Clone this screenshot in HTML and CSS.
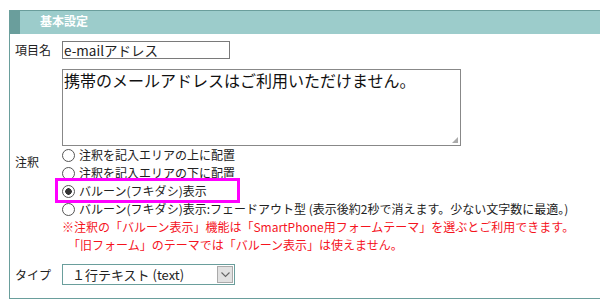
FILE: index.html
```html
<!DOCTYPE html>
<html lang="ja">

<head>
    <meta charset="UTF-8">
    <meta name="viewport" content="width=device-width, initial-scale=1.0">
    <title>基本設定</title>
    <link rel="stylesheet" href="styles.css">
</head>

<body>
    <div class="panel">
        <div class="panel-head">
            <span class="mark"></span>
            <h2>基本設定</h2>
        </div>

        <div class="form">
            <label class="label" for="item-name">項目名</label>
            <div class="field">
                <input type="text" id="item-name" class="text-input" value="e-mailアドレス">
            </div>

            <div class="label">注釈</div>
            <div class="field">
                <div class="note-wrap">
                    <textarea class="note">携帯のメールアドレスはご利用いただけません。</textarea>
                    <span class="grip"></span>
                </div>
                <div class="options">
                    <label class="option"><input type="radio" name="pos"> 注釈を記入エリアの上に配置</label>
                    <label class="option"><input type="radio" name="pos"> 注釈を記入エリアの下に配置</label>
                    <label class="option"><input type="radio" name="pos" checked> バルーン(フキダシ)表示</label>
                    <label class="option"><input type="radio" name="pos"> バルーン(フキダシ)表示:フェードアウト型 (表示後約2秒で消えます。少ない文字数に最適。)</label>
                    <p class="warn">※注釈の「バルーン表示」機能は「SmartPhone用フォームテーマ」を選ぶとご利用できます。</p>
                    <p class="warn">　「旧フォーム」のテーマでは「バルーン表示」は使えません。</p>
                    <!-- highlight over the chosen option -->
                    <div class="highlight"></div>
                </div>
            </div>

            <label class="label" for="item-type">タイプ</label>
            <div class="field">
                <div class="select-wrap">
                    <select id="item-type" class="type-select">
                        <option>１行テキスト (text)</option>
                    </select>
                    <span class="select-btn">
                        <svg width="9" height="6" viewBox="0 0 9 6">
                            <path d="M0.5 0.5 L4.5 4.5 L8.5 0.5" fill="none" stroke="#666" stroke-width="1.1" />
                        </svg>
                    </span>
                </div>
            </div>
        </div>
    </div>
</body>

</html>
```

FILE: styles.css
```css
body {
    margin: 0;
    padding: 10px 0 0 9px;
    font-family: "Noto Sans CJK JP", sans-serif;
    font-size: 12px;
    color: #222;
    background-color: #fff;
}

.panel {
    width: 591px;
    box-sizing: border-box;
    border-left: 1px solid #6a9e9c;
    border-bottom: 1px solid #6a9e9c;
}

.panel-head {
    display: flex;
    align-items: center;
    height: 23px;
    border-top: 1px solid #6a9e9c;
    background-color: #9ccccb;
}

.mark {
    width: 10px;
    height: 100%;
    background-color: #6a9e9c;
}

.panel-head h2 {
    margin: 0 0 0 20px;
    font-size: 12px;
    font-weight: bold;
    color: #fff;
    line-height: 1;
    padding-bottom: 3px;
}

.form {
    display: grid;
    grid-template-columns: 47px 1fr;
    row-gap: 10px;
    padding: 7px 0 13px 5px;
    align-items: center;
}

.label {
    line-height: 1;
}

.field {
    min-width: 0;
}

.text-input {
    display: block;
    box-sizing: border-box;
    width: 168px;
    height: 18px;
    margin: 0;
    padding: 0 1px;
    border: 1px solid #7a7a7a;
    font-family: "Noto Sans CJK JP", sans-serif;
    font-size: 13.5px;
    color: #222;
    line-height: 16px;
}

.note-wrap {
    position: relative;
    width: 399px;
}

.note {
    display: block;
    box-sizing: border-box;
    width: 399px;
    height: 77px;
    margin: 0;
    padding: 0 1px;
    border: 1px solid #888;
    font-family: "Noto Sans CJK JP", sans-serif;
    font-size: 16px;
    line-height: 20px;
    color: #111;
    resize: none;
}

.grip {
    position: absolute;
    right: 3px;
    bottom: 3px;
    width: 6px;
    height: 6px;
    background:
        radial-gradient(circle, #aaa 0.8px, transparent 1px) 0 0 / 2px 2px;
    clip-path: polygon(100% 0, 100% 100%, 0 100%);
}

.options {
    position: relative;
    white-space: nowrap;
}

.option {
    display: flex;
    align-items: center;
    height: 18px;
    line-height: 18px;
}

.option input {
    appearance: none;
    box-sizing: border-box;
    width: 13px;
    height: 13px;
    margin: 0 4px 0 0;
    border: 1px solid #555;
    border-radius: 50%;
    background: #fff;
}

.option input:checked {
    background: radial-gradient(circle, #333 0, #333 3px, #fff 3.5px);
}

.warn {
    margin: 0;
    height: 18px;
    line-height: 18px;
    color: #f5141e;
}

.highlight {
    position: absolute;
    left: -7px;
    top: 32px;
    width: 179px;
    height: 19px;
    border: 3px solid #f0f;
}

.select-wrap {
    position: relative;
    width: 173px;
}

.type-select {
    appearance: none;
    display: block;
    box-sizing: border-box;
    width: 100%;
    height: 21px;
    margin: 0;
    padding: 0 0 0 9px;
    border: 1px solid #6a9e9c;
    border-radius: 0;
    background: #fff;
    font-family: "Noto Sans CJK JP", sans-serif;
    font-size: 13px;
    color: #222;
}

.select-btn {
    position: absolute;
    top: 2px;
    right: 2px;
    box-sizing: border-box;
    width: 16px;
    height: 17px;
    display: flex;
    align-items: center;
    justify-content: center;
    border: 1px solid #aaa;
    background-color: #e1e1e1;
}
```
